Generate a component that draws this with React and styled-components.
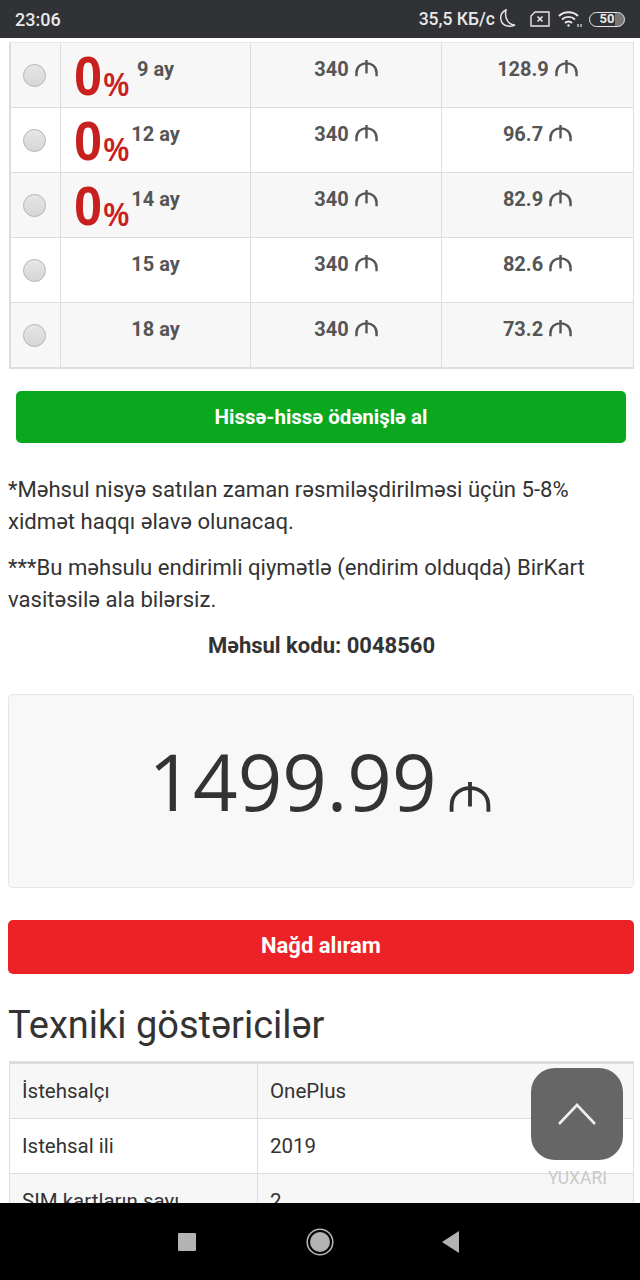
import React from "react";
import styled, { createGlobalStyle } from "styled-components";

const Global = createGlobalStyle`
  html, body { margin: 0; padding: 0; background: #fff; }
  * { box-sizing: border-box; }
  body { font-family: Roboto, "Liberation Sans", sans-serif; color: #333; }
`;

const Screen = styled.div`
  width: 640px;
  height: 1280px;
  display: flex;
  flex-direction: column;
  overflow: hidden;
  position: relative;
`;

const StatusBar = styled.div`
  height: 38px;
  flex: none;
  background: #303236;
  color: #e8e8e8;
  display: flex;
  align-items: center;
  justify-content: space-between;
  padding: 0 15px;
  font-size: 18px;
  font-weight: 500;
`;

const StatusRight = styled.div`
  display: flex;
  align-items: center;
  font-size: 17.5px;
`;

const Speed = styled.span`
  margin-right: 2px;
`;

const Content = styled.div`
  flex: 1;
  overflow: hidden;
  padding: 4px 6px 0 9px;
  position: relative;
`;

const PlanTable = styled.div`
  border: 1px solid #ddd;
  border-top-color: #e8e8e8;
  border-bottom: 2px solid #ddd;
  border-left-width: 2px;
  margin-bottom: 22px;
`;

const PlanRow = styled.div`
  display: grid;
  grid-template-columns: 50px 190px 191px 1fr;
  height: 65px;
  background: ${(props) => (props.$odd ? "#f7f7f7" : "#fff")};
  border-bottom: 1px solid #ddd;
  &:last-child {
    border-bottom: 0;
    height: 64px;
  }
`;

const RadioCell = styled.div`
  display: flex;
  align-items: center;
  justify-content: center;
  padding: 0 3px 0 0;
  border-right: 1px solid #ddd;
`;

const Radio = styled.span`
  width: 23px;
  height: 23px;
  border-radius: 50%;
  border: 1px solid #b4b4b4;
  background: linear-gradient(#e6e6e6, #d6d6d6);
`;

const ValueCell = styled.div`
  position: relative;
  display: flex;
  justify-content: center;
  align-items: center;
  gap: 6px;
  padding-bottom: 13px;
  border-right: 1px solid #ddd;
  font-size: 20px;
  font-weight: 700;
  color: #555;
  &:last-child {
    border-right: 0;
  }
`;

const ZeroBadge = styled.span`
  position: absolute;
  left: 13px;
  top: 2px;
  color: #c8201f;
  font-family: "Liberation Sans", sans-serif;
  font-weight: 700;
  font-size: 55px;
  line-height: 62px;
  display: flex;
  align-items: flex-end;
  transform: scaleX(0.92);
  transform-origin: left;
`;

const Percent = styled.span`
  font-size: 33px;
  line-height: 44px;
  margin-left: 1px;
  transform: scaleX(0.95);
  transform-origin: left;
`;

const GreenButton = styled.div`
  height: 52px;
  margin: 0 8px 0 7px;
  border-radius: 5px;
  background: #0aa81e;
  color: #fff;
  font-size: 20.5px;
  font-weight: 700;
  display: flex;
  align-items: center;
  justify-content: center;
`;

const Note = styled.p`
  margin: 0 0 14px -1px;
  font-size: 22.1px;
  line-height: 32px;
  color: #333;
`;

const FirstNote = styled(Note)`
  margin-top: 30px;
`;

const Code = styled.p`
  margin: 15px 0 0;
  text-align: center;
  font-size: 22px;
  line-height: 32px;
  font-weight: 700;
`;

const PriceBox = styled.div`
  margin: 32px 0 32px -1px;
  height: 194px;
  border: 1px solid #e6e6e6;
  border-radius: 4px;
  background: #f8f8f8;
  display: flex;
  justify-content: center;
  align-items: flex-start;
  padding: 38px 3px 0 0;
  color: #333;
  font-family: "Open Sans", sans-serif;
  font-size: 78px;
  line-height: 96px;
`;

const PriceSign = styled.span`
  display: flex;
  margin: 49px 0 0 12px;
`;

const RedButton = styled.div`
  height: 54px;
  margin-left: -1px;
  padding-bottom: 3px;
  border-radius: 5px;
  background: #ec2227;
  color: #fff;
  font-size: 22px;
  font-weight: 700;
  display: flex;
  align-items: center;
  justify-content: center;
`;

const Heading = styled.h2`
  margin: 26px 0 11px -1px;
  font-size: 38px;
  line-height: 50px;
  font-weight: 400;
  color: #333;
`;

const SpecTable = styled.div`
  border: 1px solid #ddd;
  border-top-width: 3px;
`;

const SpecRow = styled.div`
  display: grid;
  grid-template-columns: 248px 1fr;
  height: 55px;
  background: ${(props) => (props.$odd ? "#f7f7f7" : "#fff")};
  border-bottom: 1px solid #ddd;
  font-size: 20.5px;
  color: #333;
`;

const SpecCell = styled.div`
  display: flex;
  align-items: center;
  padding-left: 12px;
  &:first-child {
    border-right: 1px solid #ddd;
  }
`;

const ScrollTop = styled.div`
  position: absolute;
  left: 531px;
  top: 1030px;
  width: 92px;
`;

const ScrollButton = styled.div`
  height: 92px;
  border-radius: 24px;
  background: rgba(96, 96, 96, 0.96);
  display: flex;
  align-items: center;
  justify-content: center;
`;

const ScrollLabel = styled.div`
  margin-top: 8px;
  padding-left: 1px;
  text-align: center;
  font-size: 17.5px;
  color: #c9c9c9;
`;

const NavBar = styled.div`
  height: 77px;
  flex: none;
  background: #000;
  display: flex;
  align-items: center;
  justify-content: center;
  padding: 1px 4px 0 0;
  gap: 110px;
`;

const BackIcon = styled.svg`
  margin-left: -3px;
`;

const BatteryShell = styled.span`
  margin-left: 7px;
  width: 36px;
  height: 15px;
  border: 1.3px solid #e8e8e8;
  border-radius: 8px;
  font-size: 13px;
  font-weight: 700;
  line-height: 12px;
  text-align: center;
  color: #e8e8e8;
  background: linear-gradient(90deg, transparent 75%, #777 75%);
`;

const SimIcon = styled.svg`
  margin-left: 13px;
`;

const WifiIcon = styled.svg`
  margin-left: 8px;
`;

function Manat({ size = 23, weight = 2.5, color = "#555" }) {
  return (
    <svg width={size} height={(size * 17) / 24} viewBox="0 0 24 17" fill="none" stroke={color} strokeWidth={weight}>
      <path d="M1.5 17 V13.5 C1.5 7.5 6 3.5 12 3.5 C18 3.5 22.5 7.5 22.5 13.5 V17" />
      <path d="M12 0 V14" />
    </svg>
  );
}

function Moon() {
  return (
    <svg width="20" height="22" viewBox="0 0 20 22" fill="none" stroke="#e8e8e8" strokeWidth="1.4">
      <path d="M9 2 C5 4 3 8 4 12 C5 17 11 20 18 17 C12 17 7 11 9 2 Z" />
    </svg>
  );
}

function SimOff() {
  return (
    <SimIcon width="20" height="16" viewBox="0 0 20 16" fill="none" stroke="#e8e8e8" strokeWidth="1.4">
      <path d="M5 1 H19 V15 H1 V5 Z" />
      <path d="M7.5 5.5 L12.5 10.5 M12.5 5.5 L7.5 10.5" strokeWidth="1.6" />
    </SimIcon>
  );
}

function Wifi() {
  return (
    <WifiIcon width="24" height="18" viewBox="0 0 24 18" fill="none" stroke="#e8e8e8" strokeWidth="1.9">
      <path d="M1 6 C6 1 15 1 20 6" />
      <path d="M4 9.5 C7.5 6 13.5 6 17 9.5" />
      <path d="M7 13 C9 11 12 11 14 13" />
      <circle cx="10.5" cy="15.5" r="1.2" fill="#e8e8e8" stroke="none" />
      <path d="M20 14 V17 M23 14 V17" strokeWidth="1.2" />
    </WifiIcon>
  );
}

function NavIcons() {
  return (
    <>
      <svg width="18" height="18" viewBox="0 0 18 18">
        <rect width="18" height="18" rx="1" fill="#b3b3b3" />
      </svg>
      <svg width="28" height="28" viewBox="0 0 28 28" fill="none">
        <circle cx="14" cy="14" r="12.8" stroke="#b3b3b3" strokeWidth="1.6" />
        <circle cx="14" cy="14" r="10" fill="#b3b3b3" />
      </svg>
      <BackIcon width="18" height="22" viewBox="0 0 18 22">
        <path d="M18 0 V22 L1 11 Z" fill="#b3b3b3" />
      </BackIcon>
    </>
  );
}

const plans = [
  { months: "9 ay", total: "340", monthly: "128.9", zero: true },
  { months: "12 ay", total: "340", monthly: "96.7", zero: true },
  { months: "14 ay", total: "340", monthly: "82.9", zero: true },
  { months: "15 ay", total: "340", monthly: "82.6" },
  { months: "18 ay", total: "340", monthly: "73.2" },
];

const specs = [
  ["İstehsalçı", "OnePlus"],
  ["Istehsal ili", "2019"],
  ["SIM kartların sayı", "2"],
];

export default function App() {
  return (
    <Screen>
      <Global />
      <StatusBar>
        <span>23:06</span>
        <StatusRight>
          <Speed>35,5 КБ/с</Speed>
          <Moon />
          <SimOff />
          <Wifi />
          <BatteryShell>50</BatteryShell>
        </StatusRight>
      </StatusBar>
      <Content>
        <PlanTable>
          {plans.map((p, i) => (
            <PlanRow key={p.months} $odd={i % 2 === 0}>
              <RadioCell>
                <Radio />
              </RadioCell>
              <ValueCell>
                {p.zero && (
                  <ZeroBadge>
                    0<Percent>%</Percent>
                  </ZeroBadge>
                )}
                {p.months}
              </ValueCell>
              <ValueCell>
                {p.total} <Manat />
              </ValueCell>
              <ValueCell>
                {p.monthly} <Manat />
              </ValueCell>
            </PlanRow>
          ))}
        </PlanTable>
        <GreenButton>Hissə-hissə ödənişlə al</GreenButton>
        <FirstNote>
          *Məhsul nisyə satılan zaman rəsmiləşdirilməsi üçün 5-8% xidmət haqqı əlavə olunacaq.
        </FirstNote>
        <Note>***Bu məhsulu endirimli qiymətlə (endirim olduqda) BirKart vasitəsilə ala bilərsiz.</Note>
        <Code>Məhsul kodu: 0048560</Code>
        <PriceBox>
          1499.99
          <PriceSign>
            <Manat size={42} weight={2.2} color="#333" />
          </PriceSign>
        </PriceBox>
        <RedButton>Nağd alıram</RedButton>
        <Heading>Texniki göstəricilər</Heading>
        <SpecTable>
          {specs.map(([label, value], i) => (
            <SpecRow key={label} $odd={i % 2 === 0}>
              <SpecCell>{label}</SpecCell>
              <SpecCell>{value}</SpecCell>
            </SpecRow>
          ))}
        </SpecTable>
        <ScrollTop>
          <ScrollButton>
            <svg width="40" height="24" viewBox="0 0 40 24" fill="none" stroke="#eee" strokeWidth="2.6">
              <path d="M2 22 L20 3 L38 22" />
            </svg>
          </ScrollButton>
          <ScrollLabel>YUXARI</ScrollLabel>
        </ScrollTop>
      </Content>
      <NavBar>
        <NavIcons />
      </NavBar>
    </Screen>
  );
}
